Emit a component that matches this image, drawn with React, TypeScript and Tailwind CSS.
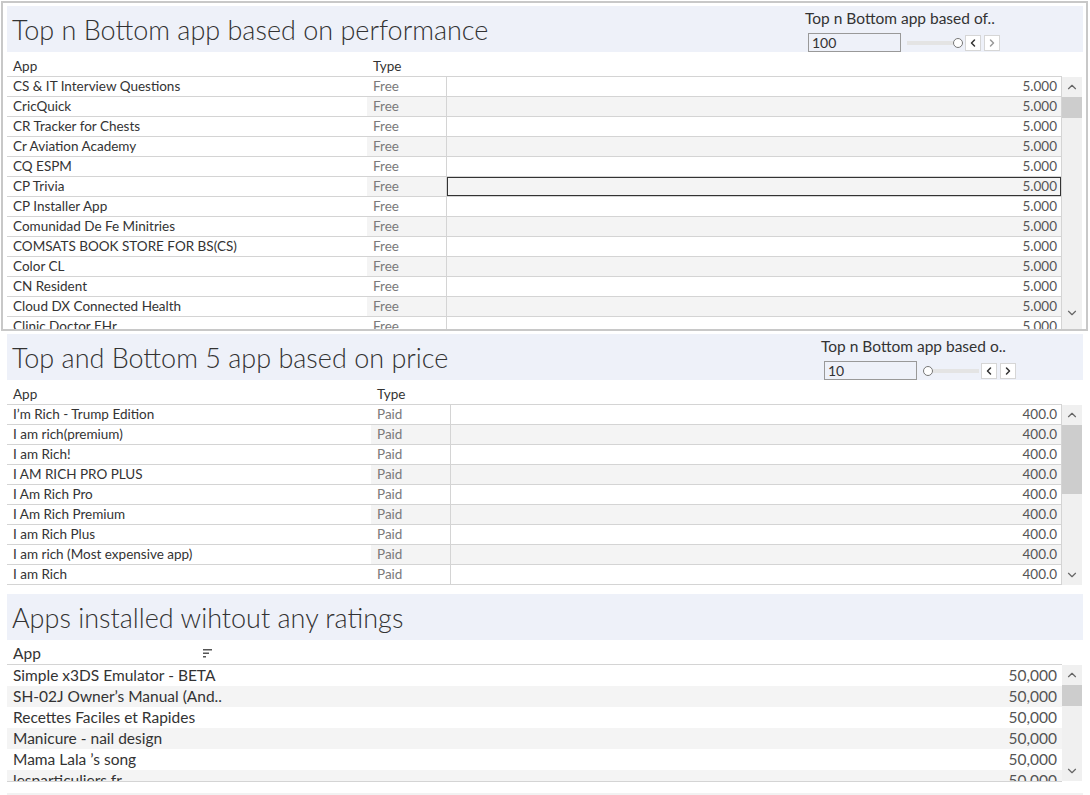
import React from "react";
import { ChevronUp, ChevronDown, ChevronLeft, ChevronRight } from "lucide-react";

const perfApps = [
  "CS & IT Interview Questions",
  "CricQuick",
  "CR Tracker for Chests",
  "Cr Aviation Academy",
  "CQ ESPM",
  "CP Trivia",
  "CP Installer App",
  "Comunidad De Fe Minitries",
  "COMSATS BOOK STORE FOR BS(CS)",
  "Color CL",
  "CN Resident",
  "Cloud DX Connected Health",
  "Clinic Doctor EHr",
];

const priceApps = [
  "I’m Rich - Trump Edition",
  "I am rich(premium)",
  "I am Rich!",
  "I AM RICH PRO PLUS",
  "I Am Rich Pro",
  "I Am Rich Premium",
  "I am Rich Plus",
  "I am rich (Most expensive app)",
  "I am Rich",
];

const unratedApps = [
  "Simple x3DS Emulator - BETA",
  "SH-02J Owner’s Manual (And..",
  "Recettes Faciles et Rapides",
  "Manicure - nail design",
  "Mama Lala ’s song",
  "lesparticuliers.fr",
];

function Band({ title, children }: { title: string; children?: React.ReactNode }) {
  return (
    <div className="flex h-[46px] bg-[#eef1f9]">
      <div className="self-center pl-[5px] text-[27px] font-light leading-none text-[#333]">{title}</div>
      {children}
    </div>
  );
}

function TopNFilter({
  label,
  value,
  thumbLeft,
  className,
}: {
  label: string;
  value: string;
  thumbLeft?: boolean;
  className: string;
}) {
  return (
    <div className={`ml-auto pt-[2px] ${className}`}>
      <div className="text-[15.5px] leading-[20px] text-[#333] whitespace-nowrap">{label}</div>
      <div className="mt-[5px] flex items-center pl-[3px]">
        <div className="flex h-[19px] w-[93px] items-center border border-[#999] pl-[3px] text-[14px] text-[#333]">
          {value}
        </div>
        {thumbLeft ? (
          <div className="ml-[6px] flex w-[56px] items-center">
            <div className="h-[10px] w-[10px] rounded-full border border-[#777] bg-white" />
            <div className="h-[4px] flex-1 bg-[#e4e4e4]" />
          </div>
        ) : (
          <div className="ml-[6px] flex w-[56px] items-center">
            <div className="h-[4px] flex-1 bg-[#e4e4e4]" />
            <div className="h-[10px] w-[10px] rounded-full border border-[#777] bg-white" />
          </div>
        )}
        <div className="ml-[2px] flex h-[16px] w-[16px] items-center justify-center border border-[#d6d6d6] bg-white">
          <ChevronLeft size={12} strokeWidth={3} className="text-[#333]" />
        </div>
        <div className="ml-[3px] flex h-[16px] w-[16px] items-center justify-center border border-[#d6d6d6] bg-white">
          <ChevronRight size={12} strokeWidth={3} className={thumbLeft ? "text-[#333]" : "text-[#999]"} />
        </div>
      </div>
    </div>
  );
}

function ScrollBar({ thumb, className }: { thumb: string; className: string }) {
  return (
    <div className={`flex w-[20px] flex-col bg-[#f0f0f0] ${className}`}>
      <div className="flex h-[20px] items-center justify-center">
        <ChevronUp size={14} strokeWidth={2} className="text-[#666]" />
      </div>
      <div className={`bg-[#cdcdcd] ${thumb}`} />
      <div className="flex-1" />
      <div className="flex h-[20px] items-center justify-center">
        <ChevronDown size={14} strokeWidth={2} className="text-[#666]" />
      </div>
    </div>
  );
}

function TypeTable({
  apps,
  type,
  value,
  appWidth,
  bodyHeight,
  highlight,
  thumb,
  barClass,
}: {
  apps: string[];
  type: string;
  value: string;
  appWidth: string;
  bodyHeight: string;
  highlight?: number;
  thumb: string;
  barClass: string;
}) {
  return (
    <>
      <div className="flex h-[24px] items-end text-[13.5px] leading-[20px] text-[#333]">
        <div className={`${appWidth} pl-[6px]`}>App</div>
        <div className="pl-[6px]">Type</div>
      </div>
      <div className="flex">
        <div className={`w-[1055px] overflow-hidden border-t border-[#d4d4d4] ${bodyHeight}`}>
          {apps.map((app, i) => {
            const band = i % 2 === 1 ? "bg-[#f4f4f4]" : "bg-white";
            return (
              <div key={app} className="flex h-[20px] border-b border-[#d4d4d4] text-[13.5px]">
                <div className={`${appWidth} flex items-center truncate pl-[6px] text-[#333]`}>{app}</div>
                <div className={`flex w-[80px] items-center border-r border-[#d4d4d4] pl-[6px] text-[#7a7a7a] ${band}`}>
                  {type}
                </div>
                <div
                  className={`flex flex-1 items-center justify-end border-r border-[#d4d4d4] pr-[4px] text-[#555] ${band} ${
                    highlight === i ? "shadow-[inset_0_0_0_1px_#333]" : ""
                  }`}
                >
                  {value}
                </div>
              </div>
            );
          })}
        </div>
        <ScrollBar thumb={thumb} className={barClass} />
      </div>
    </>
  );
}

export default function App() {
  return (
    <div className="h-[795px] w-[1090px] overflow-hidden bg-white font-['Lato',sans-serif]">
      <div className="ml-px mt-px h-[330px] w-[1087px] border-2 border-[#c8c8c8] pl-[4px] pr-[3px] pt-[3px]">
        <Band title="Top n Bottom app based on performance">
          <TopNFilter label="Top n Bottom app based of.." value="100" className="mr-[83px]" />
        </Band>
        <TypeTable
          apps={perfApps}
          type="Free"
          value="5.000"
          appWidth="w-[360px]"
          bodyHeight="h-[253px]"
          highlight={5}
          thumb="h-[21px]"
          barClass="mt-px h-[252px] pb-[6px]"
        />
      </div>

      <div className="ml-[7px] mt-[3px] w-[1076px]">
        <Band title="Top and Bottom 5 app based on price">
          <TopNFilter label="Top n Bottom app based o.." value="10" thumbLeft className="mr-[67px]" />
        </Band>
        <TypeTable
          apps={priceApps}
          type="Paid"
          value="400.0"
          appWidth="w-[364px]"
          bodyHeight="h-[181px]"
          thumb="h-[69px]"
          barClass="mt-px h-[180px]"
        />
      </div>

      <div className="ml-[7px] mt-[9px] w-[1076px]">
        <Band title="Apps installed wihtout any ratings" />
        <div className="flex h-[24px] items-end pb-[1px] text-[15.5px] leading-[20px] text-[#333]">
          <div className="w-[190px] pl-[6px]">App</div>
          <svg width="10" height="10" viewBox="0 0 10 10" className="mb-[5px] ml-[6px]">
            <rect x="0" y="1" width="9" height="1.5" fill="#555" />
            <rect x="0" y="4.5" width="6" height="1.5" fill="#555" />
            <rect x="0" y="8" width="3" height="1.5" fill="#555" />
          </svg>
        </div>
        <div className="flex">
          <div className="h-[118px] w-[1055px] overflow-hidden border-y border-[#d4d4d4]">
            {unratedApps.map((app, i) => (
              <div
                key={app}
                className={`flex h-[21px] items-center justify-between pl-[6px] pr-[5px] text-[15.5px] ${
                  i % 2 === 1 ? "bg-[#f4f4f4]" : "bg-white"
                }`}
              >
                <span className="text-[#333]">{app}</span>
                <span className="text-[#555]">50,000</span>
              </div>
            ))}
          </div>
          <ScrollBar thumb="h-[21px]" className="mt-px h-[116px]" />
        </div>
        <div className="mt-[11px] h-[2px] bg-[#f2f2f2]" />
      </div>
    </div>
  );
}
